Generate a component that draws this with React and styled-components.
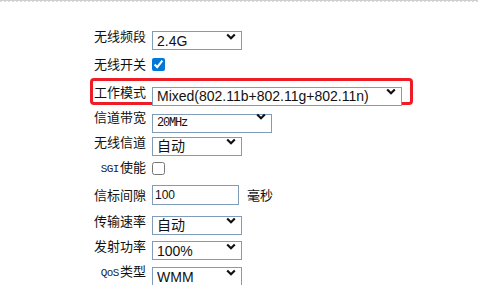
import styled, { createGlobalStyle } from "styled-components"

const Global = createGlobalStyle`
  html, body {
    margin: 0;
    padding: 0;
    background: #fff;
  }
  body {
    font-family: "Noto Sans CJK SC", "Liberation Sans", sans-serif;
  }
`

const TopRule = styled.div`
  height: 1px;
  border-top: 1px solid #cfcfcf;
  background: repeating-linear-gradient(90deg, #c9e6c3 0 2px, #ffffff 2px 4px);
`

const Form = styled.div`
  display: flex;
  flex-direction: column;
  padding: 20px 0 0 90px;
`

const Row = styled.div`
  display: flex;
  align-items: center;
  gap: 6px;
  box-sizing: border-box;
  height: ${p => p.h}px;
  width: ${p => (p.hl ? "323px" : "auto")};
  border: 3px solid ${p => (p.hl ? "#ee1c25" : "transparent")};
  border-radius: 4px;
`

const Label = styled.div`
  width: 53px;
  flex: none;
  text-align: right;
  font-size: 13px;
  line-height: 15px;
  padding-bottom: 1px;
  color: #111;
  white-space: nowrap;
`

const Latin = styled.span`
  font-family: "Liberation Mono", monospace;
  font-size: 11px;
  letter-spacing: -0.5px;
  margin-right: 1px;
  color: #222;
`

const SelectWrap = styled.div`
  position: relative;
  width: ${p => p.w}px;
  height: 19px;
  flex: none;
`

const Select = styled.select`
  appearance: none;
  box-sizing: border-box;
  width: 100%;
  height: 100%;
  margin: 0;
  padding: 0 20px 0 4px;
  border: 1px solid #7f9db9;
  border-radius: 0;
  background: #fff;
  color: #111;
  font-family: ${p => (p.mono ? '"Liberation Mono", monospace' : '"Liberation Sans", "Noto Sans CJK SC", sans-serif')};
  font-size: ${p => (p.mono ? "12px" : "14px")};
  letter-spacing: ${p => (p.mono ? "-1.2px" : "0")};
  outline: none;
`

const Chevron = styled.svg`
  position: absolute;
  right: 6px;
  top: 6px;
  width: 10px;
  height: 7px;
  pointer-events: none;
`

const Check = styled.input`
  width: 13px;
  height: 13px;
  margin: 0;
  accent-color: #0078d7;
`

const TextInput = styled.input`
  box-sizing: border-box;
  width: 87px;
  height: 20px;
  margin: 0;
  padding: 0 2px;
  border: 1px solid #7f9db9;
  font-family: "Liberation Sans", sans-serif;
  font-size: 12px;
  color: #111;
  outline: none;
`

const Unit = styled.span`
  font-size: 13px;
  color: #111;
  margin-left: 2px;
  padding-bottom: 1px;
`

function Dropdown({ w, value, options, mono }) {
  return (
    <SelectWrap w={w}>
      <Select defaultValue={value} mono={mono}>
        {options.map(o => (
          <option key={o}>{o}</option>
        ))}
      </Select>
      <Chevron viewBox="0 0 10 7">
        <path d="M1.2 1.5 L5 5.2 L8.8 1.5" fill="none" stroke="#111" strokeWidth="2.2" />
      </Chevron>
    </SelectWrap>
  )
}

export default function App() {
  return (
    <>
      <Global />
      <TopRule />
      <Form>
        <Row h={28}>
          <Label>无线频段</Label>
          <Dropdown w={90} value="2.4G" options={["2.4G", "5G"]} />
        </Row>
        <Row h={28}>
          <Label>无线开关</Label>
          <Check type="checkbox" defaultChecked />
        </Row>
        <Row h={27} hl>
          <Label>工作模式</Label>
          <Dropdown
            w={250}
            value="Mixed(802.11b+802.11g+802.11n)"
            options={["Mixed(802.11b+802.11g+802.11n)", "802.11b", "802.11g", "802.11n"]}
          />
        </Row>
        <Row h={23}>
          <Label>信道带宽</Label>
          <Dropdown w={120} mono value="20MHz" options={["20MHz", "40MHz"]} />
        </Row>
        <Row h={27}>
          <Label>无线信道</Label>
          <Dropdown w={90} value="自动" options={["自动", "1", "6", "11"]} />
        </Row>
        <Row h={27}>
          <Label>
            <Latin>SGI</Latin>使能
          </Label>
          <Check type="checkbox" />
        </Row>
        <Row h={26}>
          <Label>信标间隙</Label>
          <TextInput defaultValue="100" />
          <Unit>毫秒</Unit>
        </Row>
        <Row h={25}>
          <Label>传输速率</Label>
          <Dropdown w={90} value="自动" options={["自动"]} />
        </Row>
        <Row h={26}>
          <Label>发射功率</Label>
          <Dropdown w={90} value="100%" options={["100%", "75%", "50%"]} />
        </Row>
        <Row h={26}>
          <Label>
            <Latin>QoS</Latin>类型
          </Label>
          <Dropdown w={90} value="WMM" options={["WMM"]} />
        </Row>
      </Form>
    </>
  )
}
